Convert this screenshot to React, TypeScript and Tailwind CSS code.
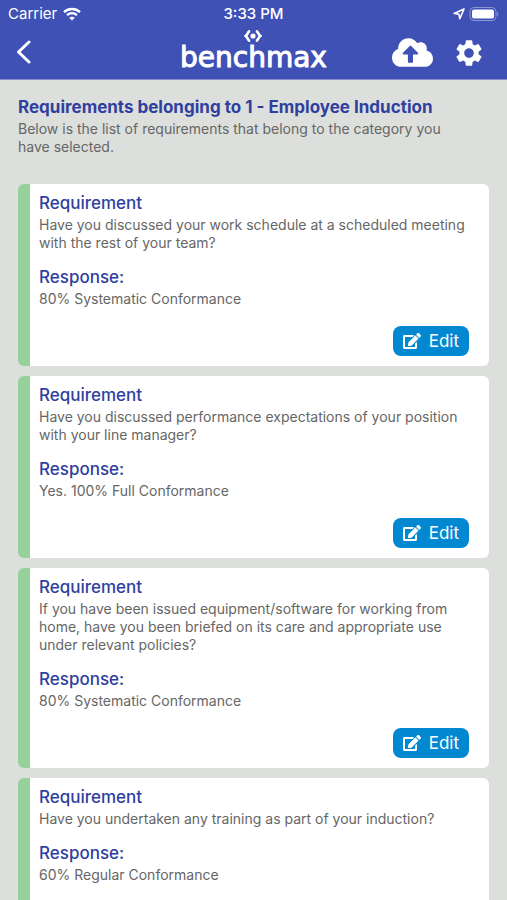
import React from 'react';
import { FaCloudUploadAlt, FaEdit } from 'react-icons/fa';
import { MdSettings } from 'react-icons/md';

interface Requirement {
  id: number;
  question: string;
  response: string;
}

const requirements: Requirement[] = [
  {
    id: 1,
    question:
      'Have you discussed your work schedule at a scheduled meeting with the rest of your team?',
    response: '80% Systematic Conformance',
  },
  {
    id: 2,
    question:
      'Have you discussed performance expectations of your position with your line manager?',
    response: 'Yes. 100% Full Conformance',
  },
  {
    id: 3,
    question:
      'If you have been issued equipment/software for working from home, have you been briefed on its care and appropriate use under relevant policies?',
    response: '80% Systematic Conformance',
  },
  {
    id: 4,
    question: 'Have you undertaken any training as part of your induction?',
    response: '60% Regular Conformance',
  },
];

const StatusBar: React.FC = () => (
  <div className="grid h-7 grid-cols-3 items-center px-2 text-[15px] font-medium">
    <div className="flex items-center gap-1.5">
      <span className="font-normal">Carrier</span>
      <svg width="18" height="14" viewBox="0 0 18 14" fill="none" stroke="currentColor">
        <path d="M1 5.2C5.5 1 12.5 1 17 5.2" strokeWidth="2.4" />
        <path d="M4 8.2C7 5.5 11 5.5 14 8.2" strokeWidth="2.3" />
        <path d="M9 13.6L6.2 10.7C7.8 9.3 10.2 9.3 11.8 10.7Z" fill="currentColor" stroke="none" />
      </svg>
    </div>
    <span className="text-center">3:33 PM</span>
    <div className="flex items-center justify-end gap-1">
      <svg width="12" height="12" viewBox="0 0 12 12" fill="none" stroke="currentColor">
        <path d="M11 1L1.2 5.4L6 6.2L6.8 10.8Z" strokeWidth="1.6" strokeLinejoin="round" />
      </svg>
      <svg width="30" height="14" viewBox="0 0 30 14">
        <rect x="1" y="0.5" width="26" height="13" rx="4" fill="none" stroke="#8c96d2" />
        <rect x="3" y="2.5" width="22" height="9" rx="2" fill="currentColor" />
        <path d="M28 5C29.6 5.6 29.6 8.4 28 9Z" fill="#8c96d2" />
      </svg>
    </div>
  </div>
);

const Logo: React.FC = () => (
  <div className="flex flex-col items-center pt-0.5">
    <svg width="18" height="12" viewBox="0 0 18 12" fill="none" stroke="currentColor">
      <path d="M6.2 1C3.6 1.2 4 4.6 1.6 6C4 7.4 3.6 10.8 6.2 11" strokeWidth="2.6" />
      <path d="M11.8 1C14.4 1.2 14 4.6 16.4 6C14 7.4 14.4 10.8 11.8 11" strokeWidth="2.6" />
      <circle cx="9" cy="6" r="2.6" fill="currentColor" stroke="none" />
    </svg>
    <span className="font-['DejaVu_Sans',sans-serif] text-[28px] leading-8 [-webkit-text-stroke:1px_white]">
      benchmax
    </span>
  </div>
);

const Header: React.FC = () => (
  <header className="bg-[#3f51b5] text-white">
    <StatusBar />
    <div className="grid h-13 grid-cols-[1fr_auto_1fr] items-start border-b border-[#8790cb] px-4">
      <button type="button" aria-label="Back" className="mt-3 w-6">
        <svg width="16" height="24" viewBox="0 0 16 24" fill="none" stroke="currentColor">
          <path d="M13 2L2.5 12L13 22" strokeWidth="3" strokeLinecap="round" strokeLinejoin="round" />
        </svg>
      </button>
      <Logo />
      <div className="mt-2 flex items-center justify-end gap-5 pr-1.5">
        <button type="button" aria-label="Upload">
          <FaCloudUploadAlt size={41} className="-my-1" />
        </button>
        <button type="button" aria-label="Settings">
          <MdSettings size={32} />
        </button>
      </div>
    </div>
  </header>
);

const RequirementCard: React.FC<{ item: Requirement }> = ({ item }) => (
  <article className="rounded-md border-l-12 border-[#96d19c] bg-white pb-2.5 pl-[9px] pr-5 pt-2">
    <h2 className="text-[17px] font-medium leading-[22px] text-[#303f9f]">Requirement</h2>
    {/* question text runs a little wider than the button row */}
    <p className="-mr-2 mt-0.5">{item.question}</p>
    <h3 className="mt-3.5 text-[17px] font-medium leading-[22px] text-[#303f9f]">Response:</h3>
    <p className="mt-0.5">{item.response}</p>
    <div className="mt-4.5 flex justify-end">
      <button
        type="button"
        className="flex h-[30px] items-center gap-2 rounded-lg bg-[#0288d1] px-2.5 text-[17px] text-white"
      >
        <FaEdit size={18} />
        Edit
      </button>
    </div>
  </article>
);

export default function App() {
  return (
    <div className="h-screen overflow-y-auto bg-[#dcdfdc] font-[Inter,sans-serif] text-[14px] leading-[18px] text-[#666666] [scrollbar-width:none]">
      <Header />
      <main className="px-[18px] pb-4 pt-4">
        <h1 className="text-[17px] font-bold leading-[22px] text-[#303f9f]">
          Requirements belonging to 1 - Employee Induction
        </h1>
        <p className="mt-0.5 pr-6">
          Below is the list of requirements that belong to the category you have selected.
        </p>
        <div className="mt-7 flex flex-col gap-2.5">
          {requirements.map((item) => (
            <RequirementCard key={item.id} item={item} />
          ))}
        </div>
      </main>
    </div>
  );
}
